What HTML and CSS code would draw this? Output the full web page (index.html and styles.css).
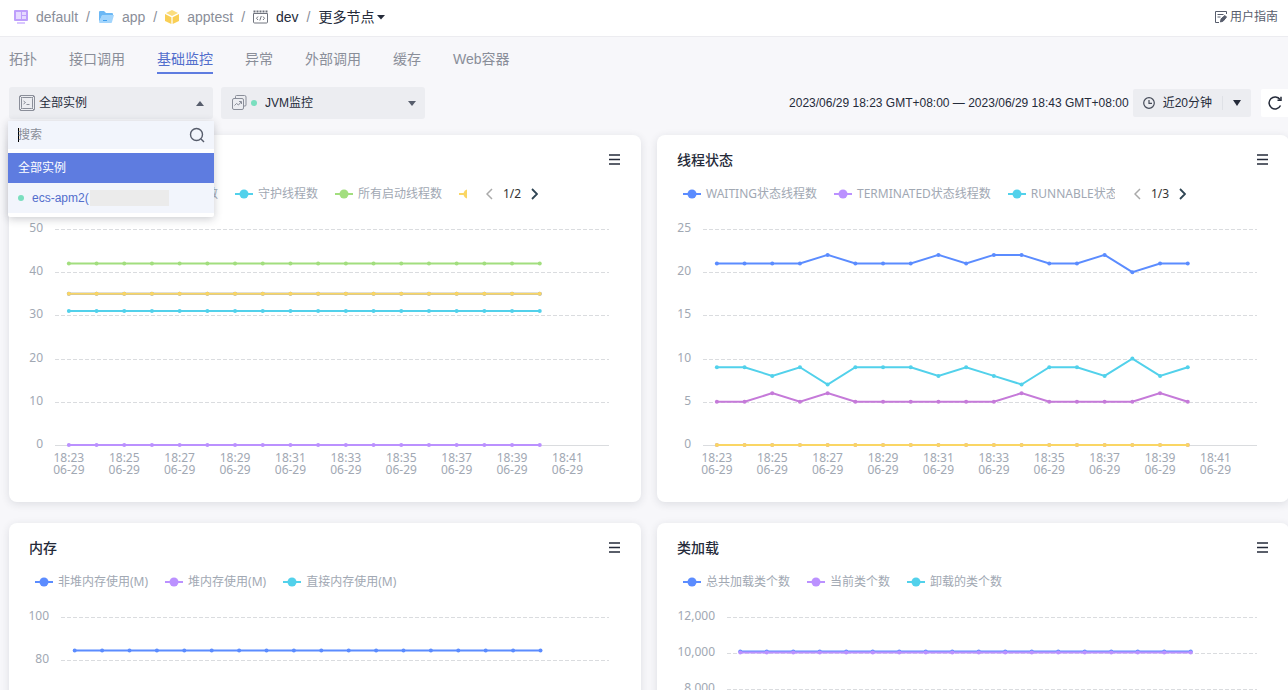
FILE: index.html
```html
<!DOCTYPE html>
<html lang="zh-CN">
<head>
    <meta charset="UTF-8">
    <meta name="viewport" content="width=device-width, initial-scale=1.0">
    <title>基础监控</title>
    <link rel="stylesheet" href="styles.css">
</head>
<body>
    <div class="page">
        <header class="header">
            <nav class="breadcrumb">
                <svg width="14" height="14" viewBox="0 0 14 14"><rect width="14" height="11" rx="1" fill="#be9ffb"/><rect x="2" y="2" width="5" height="7" fill="#e6daff"/><rect x="8" y="2" width="4" height="3" fill="#e6daff"/><rect x="8" y="6" width="4" height="3" fill="#e6daff"/><rect x="3" y="12" width="8" height="2" fill="#d9c7ff"/></svg>
                <a href="#">default</a>
                <span class="slash">/</span>
                <svg width="16" height="14" viewBox="-1 0 16 14"><path d="M0 12V2a1 1 0 0 1 1-1h4l2 2h6a1 1 0 0 1 1 1v2H3z" fill="#6cb8f5"/><path d="M3 5h12l-2 7a1 1 0 0 1-1 1H1a1 1 0 0 1-1-1z" fill="#a3d5fc"/><path d="M4 10.500h4" stroke="#3f9fee"/></svg>
                <a href="#">app</a>
                <span class="slash">/</span>
                <svg width="14" height="14" viewBox="0 0 14 14"><path d="M7 0l6 3-6 3-6-3z" fill="#fbdd7d"/><path d="M0 4l6.400 3.200V14L0 11z" fill="#f9cf55"/><path d="M14 4L7.600 7.200V14l6.400-3z" fill="#f9cf55"/></svg>
                <a href="#">apptest</a>
                <span class="slash">/</span>
                <svg width="15" height="14" viewBox="0 0 15 14" fill="none" stroke="#71757f"><path d="M.5 3.500h14V12a1 1 0 0 1-1 1h-12a1 1 0 0 1-1-1z"/><path d="M.5 1.500h14" stroke-width="2" stroke-dasharray="2 1"/><path d="M5 6.500l-1.500 1.800L5 10M10 6.500l1.500 1.800L10 10M8.300 6l-1.500 4.500"/></svg>
                <a class="current" href="#">dev</a>
                <span class="slash">/</span>
                <button class="more">更多节点<svg width="8" height="5" viewBox="0 0 8 5"><path d="M0 0h8L4 4.500z" fill="#252b3a"/></svg></button>
            </nav>
            <a class="guide" href="#">
                <svg width="12" height="12" viewBox="0 0 12 12" fill="none" stroke="#575d6c"><path d="M11.500 3V.5H.5v11H4M2.500 3.500h6M2.500 6h3"/><path d="M5.500 11l.6-3.200L10 4.500l1.500 1.600-3.300 4z" fill="#575d6c"/></svg>
                <span>用户指南</span>
            </a>
        </header>

        <nav class="tabs">
            <a href="#">拓扑</a>
            <a href="#">接口调用</a>
            <a class="active" href="#">基础监控</a>
            <a href="#">异常</a>
            <a href="#">外部调用</a>
            <a href="#">缓存</a>
            <a href="#">Web容器</a>
        </nav>

        <div class="filters">
            <div class="dropdown">
                <button class="select" aria-expanded="true" aria-haspopup="listbox">
                    <svg width="16" height="16" viewBox="0 0 16 16" fill="none" stroke="#8a8e99"><rect x=".5" y=".5" width="15" height="15" rx="1.500"/><rect x="2.500" y="2.500" width="11" height="11" rx="1"/><path d="M1 1l2 2M15 1l-2 2M1 15l2-2M15 15l-2-2M4.500 6l2 1.500-2 1.500M7.500 9.500h3"/></svg>
                    <span class="select-text">全部实例</span>
                    <svg width="8" height="5" viewBox="0 0 8 5"><path d="M0 5h8L4 0z" fill="#575d6c"/></svg>
                </button>
                <div class="dropdown-panel">
                    <label class="search">
                        <span class="cursor"></span>
                        <input type="text" placeholder="搜索" aria-label="搜索">
                        <svg width="16" height="16" viewBox="0 0 16 16" fill="none" stroke="#575d6c" stroke-width="1.400"><circle cx="7.500" cy="7.500" r="6"/><path d="M12 12l3 3"/></svg>
                    </label>
                    <ul class="options" role="listbox">
                        <li class="option selected" role="option" aria-selected="true">全部实例</li>
                        <li class="option" role="option" aria-selected="false"><i class="dot"></i><span class="option-name">ecs-apm2(</span><span class="mask"></span></li>
                    </ul>
                </div>
            </div>
            <label class="select">
                <svg width="16" height="16" viewBox="-1 0 16 16" fill="none" stroke="#8a8e99"><path d="M3.500 3V1.500a1 1 0 0 1 1-1h8a1.500 1.500 0 0 1 1.500 1.500v8a1 1 0 0 1-1 1h-1"/><rect x=".5" y="3.500" width="11" height="11" rx="1.500"/><path d="M2.500 10.500l2-2 2 1.500 2.500-3M7 6.500h2.500v2.500"/></svg>
                <i class="dot"></i>
                <select aria-label="监控项">
                    <option>JVM监控</option>
                </select>
                <svg width="8" height="5" viewBox="0 0 8 5"><path d="M0 0h8L4 5z" fill="#575d6c"/></svg>
            </label>
            <div class="range">
                <span class="range-text">2023/06/29 18:23 GMT+08:00 — 2023/06/29 18:43 GMT+08:00</span>
                <button class="range-button">
                    <svg width="12" height="12" viewBox="0 0 12 12" fill="none" stroke="#464c59" stroke-width="1.200"><circle cx="6" cy="6" r="5.300"/><path d="M6 3v3.300h3"/></svg>
                    <span>近20分钟</span>
                    <i class="divider"></i>
                    <svg width="8" height="6" viewBox="0 0 8 6"><path d="M0 0h8L4 6z" fill="#252b3a"/></svg>
                </button>
                <button class="refresh" aria-label="刷新">
                    <svg width="14" height="14" viewBox="0 0 14 14" fill="none" stroke="#252b3a" stroke-width="1.500"><path d="M12.500 9.500A6 6 0 1 1 12 3.500"/><path d="M9.500 4.200h3.500V.8" /></svg>
                </button>
            </div>
        </div>

        <main class="cards" id="cards"></main>
    </div>
    <script src="script.js"></script>
</body>
</html>
```
FILE: styles.css
```css
* {
    box-sizing: border-box;
}
body {
    margin: 0;
    font-family: "Liberation Sans", "Noto Sans CJK SC", sans-serif;
    font-size: 12px;
    line-height: 20px;
    color: #252b3a;
    background: #f7f7fa;
}
a {
    color: inherit;
    text-decoration: none;
}
button, input, select {
    font: inherit;
    color: inherit;
    border: none;
    background: none;
    padding: 0;
    outline: none;
}
button {
    cursor: pointer;
}
svg {
    flex: none;
    display: block;
}
.page {
    height: 100vh;
    overflow-x: hidden;
    overflow-y: auto;
    scrollbar-width: none;
}

/* header */
.header {
    display: flex;
    align-items: center;
    justify-content: space-between;
    height: 37px;
    padding: 0 10px 2px 14px;
    background: #fff;
    border-bottom: 1px solid #ececf0;
}
.breadcrumb {
    display: flex;
    align-items: center;
    gap: 8px;
    font-size: 14px;
    color: #8a8e99;
}
.breadcrumb .current, .more {
    color: #252b3a;
}
.slash {
    color: #8a8e99;
}
.more {
    display: flex;
    align-items: center;
    gap: 3px;
}
.guide {
    display: flex;
    align-items: center;
    gap: 3px;
    color: #575d6c;
}

/* tabs */
.tabs {
    display: flex;
    gap: 32px;
    padding: 12px 9px 0;
    font-size: 14px;
    color: #8a8e99;
}
.tabs a {
    padding-bottom: 3px;
    border-bottom: 2px solid transparent;
}
.tabs .active {
    color: #526ecc;
    border-color: #5e7ce0;
}

/* filters */
.filters {
    display: flex;
    align-items: center;
    gap: 8px;
    margin-top: 13px;
    padding-left: 9px;
}
.dropdown {
    position: relative;
}
.select {
    display: flex;
    align-items: center;
    gap: 4px;
    width: 204px;
    height: 32px;
    padding: 0 9px 0 10px;
    background: #ecedf1;
    border-radius: 3px;
    text-align: left;
}
.select-text, .select select {
    flex: 1;
    min-width: 0;
}
.select select {
    appearance: none;
    padding-left: 4px;
}
.dot {
    flex: none;
    width: 6px;
    height: 6px;
    border-radius: 50%;
    background: #7adfbf;
}
.dropdown-panel {
    position: absolute;
    z-index: 10;
    top: 34px;
    left: -1px;
    width: 206px;
    padding-bottom: 4px;
    background: #fff;
    border-radius: 2px;
    box-shadow: 0 2px 8px rgba(37, 43, 58, 0.24);
}
.search {
    display: flex;
    align-items: center;
    height: 28px;
    padding: 0 9px 0 10px;
    background: #f2f5fc;
}
.cursor {
    width: 1px;
    height: 14px;
    margin-right: -1px;
    background: #000;
}
.search input {
    flex: 1;
    min-width: 0;
}
.search input::placeholder {
    color: #8a8e99;
}
.options {
    margin: 4px 0 0;
    padding: 0;
    list-style: none;
}
.option {
    display: flex;
    align-items: center;
    height: 30px;
    padding: 0 10px;
    color: #526ecc;
    background: #f2f5fc;
}
.option.selected {
    color: #fff;
    background: #5e7ce0;
}
.option-name {
    margin: 0 1px 0 8px;
}
.mask {
    width: 79px;
    height: 16px;
    background: #ebebeb;
}
.range {
    display: flex;
    align-items: center;
    margin-left: auto;
}
.range-button {
    display: flex;
    align-items: center;
    height: 28px;
    margin: 0 10px 0 4px;
    padding: 0 10px;
    background: #ecedf1;
    border-radius: 2px;
}
.range-button span {
    margin: 0 10px 0 8px;
}
.divider {
    width: 1px;
    height: 14px;
    margin-right: 10px;
    background: #dfe1e6;
}
.refresh {
    height: 28px;
    padding: 0 6px 0 7px;
    background: #fff;
    border-radius: 2px 0 0 2px;
}

/* cards */
.cards {
    display: grid;
    grid-template-columns: 1fr 1fr;
    gap: 21px 16px;
    margin: 16px -1px 21px 9px;
}
.card {
    min-width: 0;
    padding: 14px 20px 12px;
    background: #fff;
    border-radius: 8px;
    box-shadow: 0 2px 8px rgba(37, 43, 58, 0.12);
}
.card-head {
    display: flex;
    align-items: center;
    justify-content: space-between;
    height: 22px;
}
.card-head h2 {
    margin: 0;
    font-size: 14px;
    font-weight: 500;
    line-height: 22px;
}
.legend {
    display: flex;
    align-items: center;
    margin-top: 13px;
    padding-left: 6px;
    font-family: "Noto Sans", "Noto Sans CJK SC", sans-serif;
}
.legend-items {
    display: flex;
    gap: 17px;
    width: 432px;
    overflow: hidden;
    white-space: nowrap;
    color: #a1a8b3;
}
.legend-item {
    display: flex;
    flex: none;
    align-items: center;
    gap: 5px;
}
.pager {
    display: flex;
    align-items: center;
    gap: 10px;
    margin-left: 19px;
    color: #333;
}
.chart {
    height: 276px;
    margin-top: 10px;
    font-family: "Noto Sans", "Noto Sans CJK SC", sans-serif;
    font-size: 12px;
}
.chart text {
    fill: #a1a8b3;
}
```
FILE: script.js
```js
const BLUE = '#5b8cff';
const PURPLE = '#bb91ff';
const CYAN = '#52d1eb';
const GREEN = '#a2de7e';
const YELLOW = '#fad664';
const PINK = '#c57ad9';

const SLOTS = 20;
const POINTS = 18;
const same = (value) => Array(POINTS).fill(value);

const charts = [
    {
        title: '线程数',
        pages: '1/2',
        perPage: 5,
        max: 50,
        step: 10,
        axis: 26,
        series: [
            { name: '当前线程数', color: BLUE, data: same(35) },
            { name: '死锁线程数', color: PURPLE, data: same(0) },
            { name: '守护线程数', color: CYAN, data: same(31) },
            { name: '所有启动线程数', color: GREEN, data: same(42) },
            { name: '峰值线程数', color: YELLOW, data: same(35) }
        ]
    },
    {
        title: '线程状态',
        pages: '1/3',
        perPage: 3,
        max: 25,
        step: 5,
        axis: 26,
        series: [
            { name: 'WAITING状态线程数', color: BLUE, data: [21, 21, 21, 21, 22, 21, 21, 21, 22, 21, 22, 22, 21, 21, 22, 20, 21, 21] },
            { name: 'TERMINATED状态线程数', color: PURPLE, data: same(0) },
            { name: 'RUNNABLE状态线程数', color: CYAN, data: [9, 9, 8, 9, 7, 9, 9, 9, 8, 9, 8, 7, 9, 9, 8, 10, 8, 9] },
            { name: 'BLOCKED状态线程数', color: YELLOW, data: same(0) },
            { name: 'TIMED_WAITING状态线程数', color: PINK, data: [5, 5, 6, 5, 6, 5, 5, 5, 5, 5, 5, 6, 5, 5, 5, 5, 6, 5] }
        ]
    },
    {
        title: '内存',
        perPage: 3,
        max: 100,
        step: 20,
        axis: 32,
        series: [
            { name: '非堆内存使用(M)', color: BLUE, data: same(84.5) },
            { name: '堆内存使用(M)', color: PURPLE, data: same(48) },
            { name: '直接内存使用(M)', color: CYAN, data: same(2) }
        ]
    },
    {
        title: '类加载',
        perPage: 3,
        max: 12000,
        step: 2000,
        axis: 50,
        series: [
            { name: '总共加载类个数', color: BLUE, data: same(10080) },
            { name: '当前类个数', color: PURPLE, data: same(10030) },
            { name: '卸载的类个数', color: CYAN, data: same(0) }
        ]
    }
];

function legendItem(s) {
    return `<span class="legend-item">
        <svg width="18" height="10" viewBox="0 0 18 10"><path d="M0 5h18" stroke="${s.color}" stroke-width="2"/><circle cx="9" cy="5" r="4.500" fill="${s.color}"/></svg>
        <span>${s.name}</span>
    </span>`;
}

function pager(pages) {
    return `<div class="pager">
        <button aria-label="上一页"><svg width="7" height="12" viewBox="0 0 7 12" fill="none" stroke="#aaa" stroke-width="1.500"><path d="M6 1L1 6l5 5"/></svg></button>
        <span>${pages}</span>
        <button aria-label="下一页"><svg width="7" height="12" viewBox="0 0 7 12" fill="none" stroke="#2f4554" stroke-width="1.800"><path d="M1 1l5 5-5 5"/></svg></button>
    </div>`;
}

function drawChart(el, chart) {
    const width = el.clientWidth;
    const left = chart.axis;
    const right = width - 12;
    const top = 15;
    const bottom = 231;
    const slot = (right - left) / SLOTS;
    const x = (i) => left + slot * (i + 0.5);
    const y = (v) => bottom - (v / chart.max) * (bottom - top);
    let out = '';

    // horizontal grid and value labels
    for (let v = 0; v <= chart.max; v += chart.step) {
        const line = Math.round(y(v)) + 0.5;
        const dash = v === 0 ? '' : 'stroke-dasharray="4 2"';
        out += `<path d="M${left} ${line}H${right}" stroke="#dadcdf" ${dash}/>`;
        out += `<text x="${left - 12}" y="${line + 2.5}" text-anchor="end">${v.toLocaleString('en-US')}</text>`;
    }

    // a time label under every second slot
    for (let i = 0; i < SLOTS; i += 2) {
        out += `<text x="${x(i)}" y="248" text-anchor="middle">18:${23 + i}</text>`;
        out += `<text x="${x(i)}" y="260" text-anchor="middle">06-29</text>`;
    }

    chart.series.forEach((s) => {
        const points = s.data.map((v, i) => `${x(i)},${y(v)}`).join(' ');
        out += `<polyline points="${points}" fill="none" stroke="${s.color}" stroke-width="2"/>`;
        s.data.forEach((v, i) => {
            out += `<circle cx="${x(i)}" cy="${y(v)}" r="2" fill="${s.color}"/>`;
        });
    });

    el.innerHTML = `<svg width="${width}" height="276">${out}</svg>`;
}

document.getElementById('cards').innerHTML = charts.map((c) => `
    <section class="card">
        <div class="card-head">
            <h2>${c.title}</h2>
            <button aria-label="菜单"><svg width="12" height="12" viewBox="0 0 12 12" stroke="#252b3a" stroke-width="1.500"><path d="M0 1h11M0 5.500h11M0 10h11"/></svg></button>
        </div>
        <div class="legend">
            <div class="legend-items">${c.series.slice(0, c.perPage).map(legendItem).join('')}</div>
            ${c.pages ? pager(c.pages) : ''}
        </div>
        <div class="chart"></div>
    </section>`).join('');

function drawAll() {
    document.querySelectorAll('.chart').forEach((el, i) => drawChart(el, charts[i]));
}

drawAll();
window.addEventListener('resize', drawAll);
```
